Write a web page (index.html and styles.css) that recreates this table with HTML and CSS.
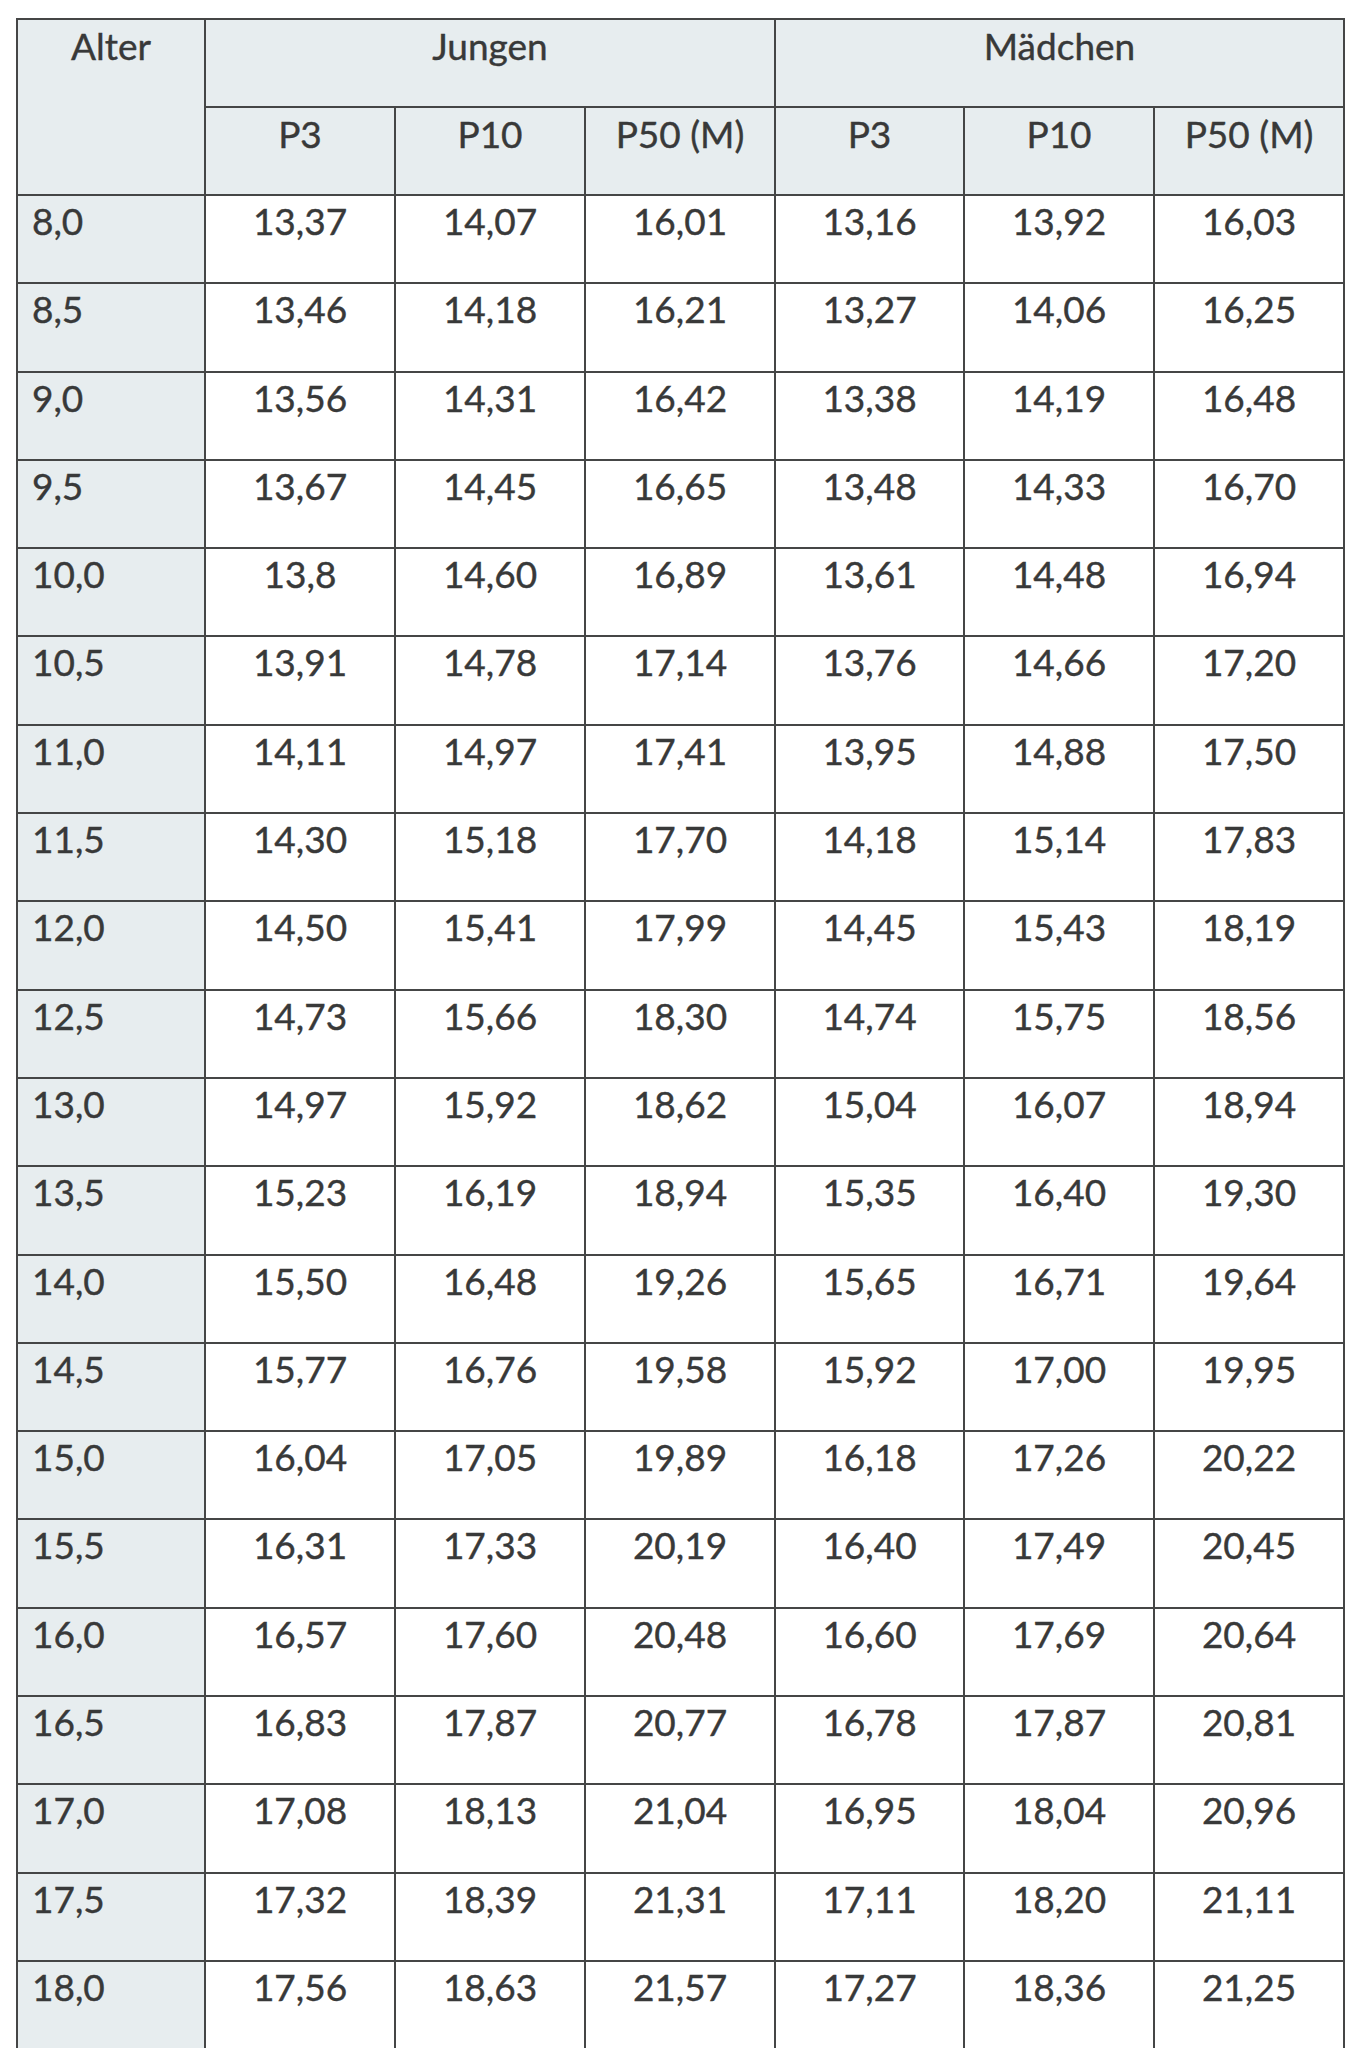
FILE: index.html
```html
<!DOCTYPE html>
<html lang="de">
<head>
<meta charset="utf-8">
<title>Perzentile</title>
<link rel="stylesheet" href="styles.css">
</head>
<body>
<table class="bmi">
  <colgroup>
    <col class="c-age">
    <col class="c-a"><col class="c-a"><col class="c-a">
    <col class="c-b"><col class="c-a"><col class="c-a">
  </colgroup>
  <thead>
    <tr class="hrow">
      <th class="age" rowspan="2">Alter</th>
      <th colspan="3">Jungen</th>
      <th colspan="3">Mädchen</th>
    </tr>
    <tr class="hrow">
      <th>P3</th><th>P10</th><th>P50 (M)</th>
      <th>P3</th><th>P10</th><th>P50 (M)</th>
    </tr>
  </thead>
  <tbody>
    <tr><td class="age">8,0</td><td>13,37</td><td>14,07</td><td>16,01</td><td>13,16</td><td>13,92</td><td>16,03</td></tr>
    <tr><td class="age">8,5</td><td>13,46</td><td>14,18</td><td>16,21</td><td>13,27</td><td>14,06</td><td>16,25</td></tr>
    <tr><td class="age">9,0</td><td>13,56</td><td>14,31</td><td>16,42</td><td>13,38</td><td>14,19</td><td>16,48</td></tr>
    <tr><td class="age">9,5</td><td>13,67</td><td>14,45</td><td>16,65</td><td>13,48</td><td>14,33</td><td>16,70</td></tr>
    <tr><td class="age">10,0</td><td>13,8</td><td>14,60</td><td>16,89</td><td>13,61</td><td>14,48</td><td>16,94</td></tr>
    <tr><td class="age">10,5</td><td>13,91</td><td>14,78</td><td>17,14</td><td>13,76</td><td>14,66</td><td>17,20</td></tr>
    <tr><td class="age">11,0</td><td>14,11</td><td>14,97</td><td>17,41</td><td>13,95</td><td>14,88</td><td>17,50</td></tr>
    <tr><td class="age">11,5</td><td>14,30</td><td>15,18</td><td>17,70</td><td>14,18</td><td>15,14</td><td>17,83</td></tr>
    <tr><td class="age">12,0</td><td>14,50</td><td>15,41</td><td>17,99</td><td>14,45</td><td>15,43</td><td>18,19</td></tr>
    <tr><td class="age">12,5</td><td>14,73</td><td>15,66</td><td>18,30</td><td>14,74</td><td>15,75</td><td>18,56</td></tr>
    <tr><td class="age">13,0</td><td>14,97</td><td>15,92</td><td>18,62</td><td>15,04</td><td>16,07</td><td>18,94</td></tr>
    <tr><td class="age">13,5</td><td>15,23</td><td>16,19</td><td>18,94</td><td>15,35</td><td>16,40</td><td>19,30</td></tr>
    <tr><td class="age">14,0</td><td>15,50</td><td>16,48</td><td>19,26</td><td>15,65</td><td>16,71</td><td>19,64</td></tr>
    <tr><td class="age">14,5</td><td>15,77</td><td>16,76</td><td>19,58</td><td>15,92</td><td>17,00</td><td>19,95</td></tr>
    <tr><td class="age">15,0</td><td>16,04</td><td>17,05</td><td>19,89</td><td>16,18</td><td>17,26</td><td>20,22</td></tr>
    <tr><td class="age">15,5</td><td>16,31</td><td>17,33</td><td>20,19</td><td>16,40</td><td>17,49</td><td>20,45</td></tr>
    <tr><td class="age">16,0</td><td>16,57</td><td>17,60</td><td>20,48</td><td>16,60</td><td>17,69</td><td>20,64</td></tr>
    <tr><td class="age">16,5</td><td>16,83</td><td>17,87</td><td>20,77</td><td>16,78</td><td>17,87</td><td>20,81</td></tr>
    <tr><td class="age">17,0</td><td>17,08</td><td>18,13</td><td>21,04</td><td>16,95</td><td>18,04</td><td>20,96</td></tr>
    <tr><td class="age">17,5</td><td>17,32</td><td>18,39</td><td>21,31</td><td>17,11</td><td>18,20</td><td>21,11</td></tr>
    <tr><td class="age">18,0</td><td>17,56</td><td>18,63</td><td>21,57</td><td>17,27</td><td>18,36</td><td>21,25</td></tr>
  </tbody>
</table>
</body>
</html>
```

FILE: styles.css
```css
html, body {
  margin: 0;
  padding: 0;
  background: #ffffff;
}

body {
  font-family: Lato, "Noto Sans", sans-serif;
  color: #383939;
}

.bmi {
  margin: 18px 0 0 16px;
  border-collapse: separate;
  border-spacing: 0;
  table-layout: fixed;
  width: 1329px;
  border-top: 2px solid #454646;
  border-left: 2px solid #454646;
  font-size: 37px;
  line-height: 1.2;
  -webkit-text-stroke: 0.4px #383939;
}

.c-age { width: 188px; }
.c-a { width: 190px; }
.c-b { width: 189px; }

.bmi th,
.bmi td {
  box-sizing: border-box;
  border-right: 2px solid #454646;
  border-bottom: 2px solid #454646;
  padding: 3px 0 0 0;
  vertical-align: top;
  text-align: center;
  font-weight: 400;
  white-space: nowrap;
}

.bmi thead tr {
  height: 88px;
}

.bmi tbody tr {
  height: 88.3px;
}

.bmi th {
  background: #e7edef;
  padding-top: 4px;
}

.bmi td {
  background: #ffffff;
}

.bmi td.age {
  background: #e7edef;
  text-align: left;
  padding-left: 14px;
}
```
